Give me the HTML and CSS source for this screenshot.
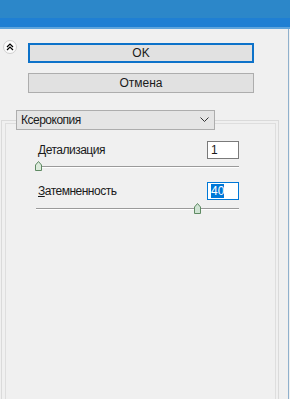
FILE: index.html
```html
<!DOCTYPE html>
<html lang="ru">
<head>
    <meta charset="UTF-8">
    <title>Ксерокопия</title>
    <link rel="stylesheet" href="styles.css">
</head>
<body>
    <div class="titlebar"></div>
    <div class="window">
        <div class="top-row">
            <div class="expand">
                <svg width="8" height="8" viewBox="0 0 8 8"><path d="M1 4 L4 1 L7 4 M1 7 L4 4 L7 7" fill="none" stroke="#000" stroke-width="1.2"/></svg>
            </div>
            <div class="btn btn-default">OK</div>
        </div>
        <div class="btn btn-cancel">Отмена</div>

        <div class="dropdown">
            <span>Ксерокопия</span>
            <svg width="9" height="6" viewBox="0 0 9 6"><path d="M0.5 0.5 L4.5 4.5 L8.5 0.5" fill="none" stroke="#333" stroke-width="1"/></svg>
        </div>
        <div class="frame">
            <div class="frame-inner">
                <div class="param-row first">
                    <span class="label"><u>Д</u>етализация</span>
                    <div class="num-box">1</div>
                </div>
                <div class="slider">
                    <div class="track"></div>
                    <svg class="thumb" style="left: -1px" width="7" height="10" viewBox="0 0 7 10"><path d="M0.5 4 L3.5 0.5 L6.5 4 L6.5 9.5 L0.5 9.5 Z" fill="#dcebdc" stroke="#5f8a63"/></svg>
                </div>
                <div class="param-row second">
                    <span class="label"><u>З</u>атемненность</span>
                    <div class="num-box focused"><span class="selected">40</span></div>
                </div>
                <div class="slider slider-two">
                    <div class="track"></div>
                    <svg class="thumb" style="left: 158px" width="7" height="11" viewBox="0 0 7 11"><path d="M0.5 4 L3.5 0.5 L6.5 4 L6.5 10.5 L0.5 10.5 Z" fill="#cfe3d3" stroke="#5f8a63"/></svg>
                </div>
            </div>
        </div>
    </div>
</body>
</html>
```

FILE: styles.css
```css
html, body {
    margin: 0;
    padding: 0;
    height: 100%;
    overflow: hidden;
}

body {
    display: flex;
    flex-direction: column;
    background-color: #f0f0f0;
    font-family: "Liberation Sans", Arial, sans-serif;
    font-size: 12px;
    color: #1a1a1a;
}

/* заголовок окна */
.titlebar {
    height: 29px;
    flex-shrink: 0;
    background: linear-gradient(#2c87c9 0, #2c87c9 18px, #1f7fd3 18px, #1f7fd3 27px, #5ea4dc 27px);
}

.window {
    flex: 1;
    display: flex;
    flex-direction: column;
    width: 288px;
    border-right: 1px solid #8fb0cc;
}

.top-row {
    display: flex;
    align-items: flex-start;
    padding: 11px 0 0 3px;
}

/* круглая кнопка свернуть */
.expand {
    width: 12px;
    height: 12px;
    border: 1px solid #cfcfcf;
    border-radius: 50%;
    background-color: #fbfbfb;
    display: flex;
    align-items: center;
    justify-content: center;
}

.btn {
    width: 226px;
    height: 20px;
    box-sizing: border-box;
    background-color: #e1e1e1;
    display: flex;
    align-items: center;
    justify-content: center;
}

.btn-default {
    margin: 3px 0 0 11px;
    border: 2px solid #0d72c9;
}

.btn-cancel {
    margin: 10px 0 0 28px;
    border: 1px solid #adadad;
}

/* выпадающий список */
.dropdown {
    position: relative;
    z-index: 1;
    margin: 17px 0 0 16px;
    width: 199px;
    height: 20px;
    box-sizing: border-box;
    border: 1px solid #adadad;
    background-color: #e5e5e5;
    display: flex;
    align-items: center;
    justify-content: space-between;
    padding: 0 5px 0 4px;
    letter-spacing: -0.5px;
}

/* рамка группы */
.frame {
    flex: 1;
    display: flex;
    margin: -10px 0 -6px 1px;
    width: 278px;
    box-sizing: border-box;
    border: 1px solid #dadada;
}

.frame-inner {
    flex: 1;
    margin: 2px 2px 0 3px;
    border: 1px solid #dedede;
    display: flex;
    flex-direction: column;
}

.param-row {
    display: flex;
    align-items: center;
    justify-content: space-between;
    padding: 0 36px 0 32px;
}

.label {
    letter-spacing: -0.5px;
}

.param-row.first {
    margin-top: 17px;
}

.param-row.second {
    margin-top: 11px;
}

.num-box {
    width: 32px;
    height: 18px;
    box-sizing: border-box;
    border: 1px solid #7a7a7a;
    background-color: #fff;
    padding-left: 3px;
    display: flex;
    align-items: center;
}

.num-box.focused {
    border-color: #0078d7;
}

.selected {
    background-color: #0078d7;
    color: #fff;
}

/* ползунок */
.slider {
    position: relative;
    margin: 2px 0 0 30px;
    width: 203px;
    height: 10px;
}

.slider-two {
    margin-top: 3px;
    height: 11px;
}

.track {
    margin-top: 5px;
    height: 1px;
    background-color: #9a9a9a;
    border-bottom: 1px solid #fff;
}

.thumb {
    position: absolute;
    top: 0;
}
```
